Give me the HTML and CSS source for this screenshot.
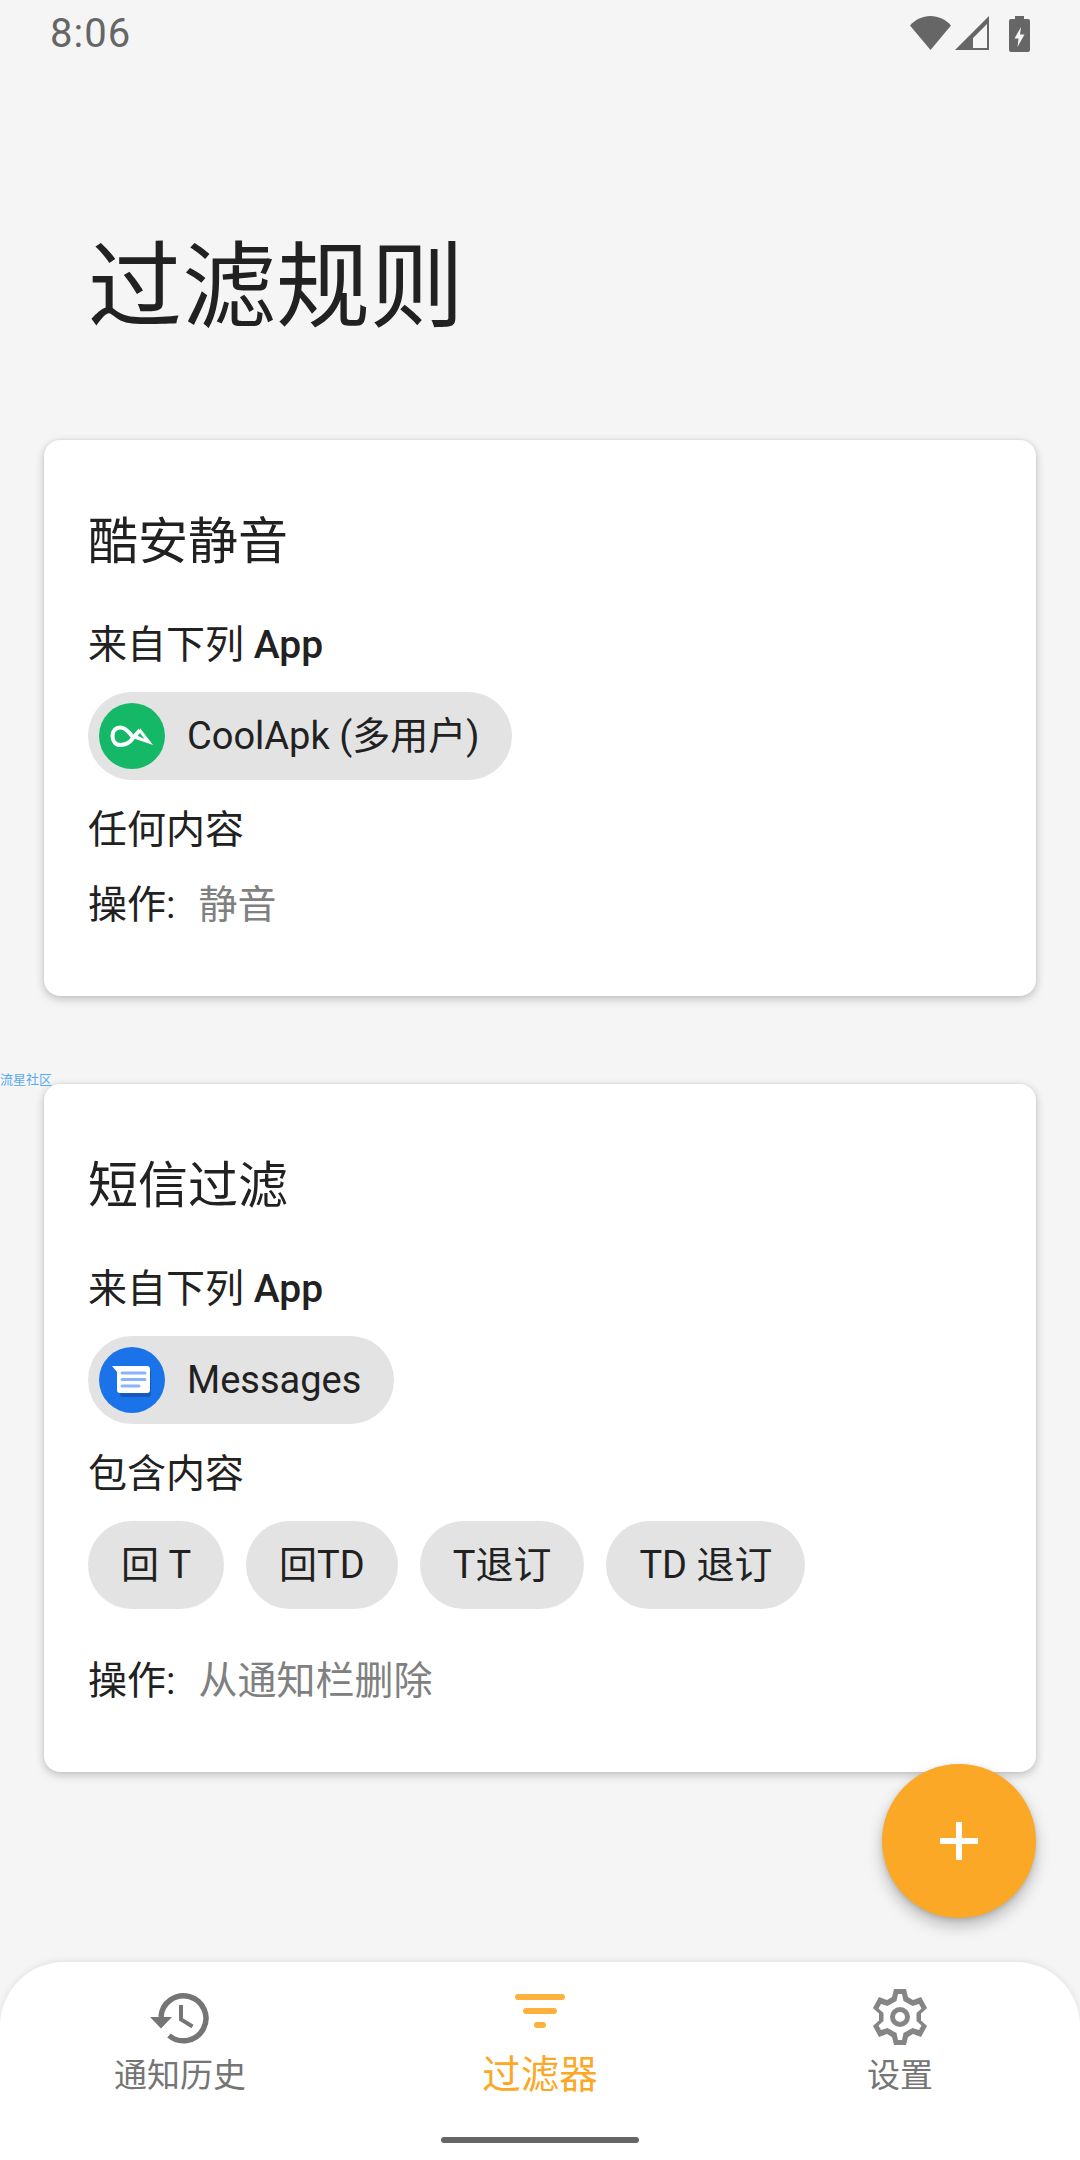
FILE: index.html
```html
<!DOCTYPE html>
<html lang="zh-CN">
<head>
<meta charset="utf-8">
<title>过滤规则</title>
<link rel="stylesheet" href="styles.css">
</head>
<body>
<div class="screen">
  <div class="status">
    <span class="time">8:06</span>
    <div class="status-icons">
      <svg class="ic-wifi" viewBox="0 0 41 34"><path d="M0 9.500C5.500 3.500 12.500 0 20.500 0S35.500 3.500 41 9.500L20.500 34z"/></svg>
      <svg class="ic-signal" viewBox="0 0 34 34"><path fill-rule="evenodd" d="M34 0v34H0zM32 8L18 22V32h14z"/></svg>
      <svg class="ic-batt" viewBox="0 0 21 36"><path fill-rule="evenodd" d="M6 0h9v3h4a2 2 0 0 1 2 2v29a2 2 0 0 1-2 2H2a2 2 0 0 1-2-2V5a2 2 0 0 1 2-2h4zM12 11L5.500 22.500H9.500L8.500 31l7-12.500H11z"/></svg>
    </div>
  </div>

  <h1 class="page-title">过滤规则</h1>

  <main class="cards">
    <section class="card">
      <h2 class="card-title">酷安静音</h2>
      <p class="line line-from">来自下列 <b>App</b></p>
      <div class="chips">
        <span class="chip chip-app">
          <svg class="app-icon" viewBox="0 0 66 66">
            <circle cx="33" cy="33" r="33" fill="#14b866"/>
            <path d="M41 27L31 38.500C28 41 25 42 21.500 42C16.500 42 13.500 38 13.500 33C13.500 28 16.500 24.500 21.500 24.500C26 24.500 29.500 28 34 34.500" fill="none" stroke="#fff" stroke-width="4"/>
            <path d="M41 25L54 42L35 35.500L38 32.500L45.500 36L41 30z" fill="#fff"/>
          </svg>
          <span>CoolApk (多用户)</span>
        </span>
      </div>
      <p class="line line-any">任何内容</p>
      <p class="line line-op">操作:<span class="op">静音</span></p>
    </section>

    <section class="card">
      <span class="watermark">流星社区</span>
      <h2 class="card-title">短信过滤</h2>
      <p class="line line-from">来自下列 <b>App</b></p>
      <div class="chips">
        <span class="chip chip-app">
          <svg class="app-icon" viewBox="0 0 66 66">
            <circle cx="33" cy="33" r="33" fill="#1a73e8"/>
            <path d="M16 23h33a3 3 0 0 1 3 3v21a3 3 0 0 1-3 3H24a3 3 0 0 1-3-3V30z" fill="#174ea6" opacity=".7"/>
            <path d="M13 19h35a3 3 0 0 1 3 3v21a3 3 0 0 1-3 3H21a3 3 0 0 1-3-3V25z" fill="#fff"/>
            <path d="M23 26h23M23 32.500h23M23 39h17" stroke="#8ab4f8" stroke-width="3" stroke-linecap="round" fill="none"/>
          </svg>
          <span>Messages</span>
        </span>
      </div>
      <p class="line line-any">包含内容</p>
      <div class="chips">
        <span class="chip">回 T</span>
        <span class="chip">回TD</span>
        <span class="chip">T退订</span>
        <span class="chip">TD 退订</span>
      </div>
      <p class="line line-op line-op-after">操作:<span class="op">从通知栏删除</span></p>
    </section>
  </main>

  <button class="fab" type="button" aria-label="添加">
    <svg viewBox="0 0 40 40"><path d="M20 1v38M1 20h38" stroke="#fff" stroke-width="6" fill="none"/></svg>
  </button>

  <nav class="nav">
    <div class="tabs">
      <div class="tab">
        <svg class="tab-icon" viewBox="0 0 60 60"><path d="M11 30A22.500 22.500 0 1 1 19 48.500" fill="none" stroke="#757575" stroke-width="5.500"/><path d="M0 30h22L11 41.500z" fill="#757575"/><path d="M31 18v14.500l11.500 7" fill="none" stroke="#757575" stroke-width="4"/></svg>
        <span>通知历史</span>
      </div>
      <div class="tab tab-active">
        <svg class="tab-icon" viewBox="0 0 60 60"><rect x="5" y="7" width="50" height="6" rx="3" fill="#ffb13b"/><rect x="13" y="21" width="34" height="6" rx="3" fill="#ffb13b"/><rect x="24" y="35" width="12" height="6" rx="3" fill="#ffb13b"/></svg>
        <span>过滤器</span>
      </div>
      <div class="tab">
        <svg class="tab-icon" viewBox="0 0 60 60"><path fill="#858585" fill-rule="evenodd" d="M24 2h12l2 8 5 3 8-3 6 11-6 5.500v7L57 39l-6 11-8-3-5 3-2 8H24l-2-8-5-3-8 3-6-11 6-5.500v-7L3 21l6-11 8 3 5-3zM28 7l-1.500 7-9 5L11 17l-2.500 4.500 5 4.500v8l-5 4.500L11 43l6.500-2 9 5L28 53h4l1.500-7 9-5L49 43l2.500-4.500-5-4.500v-8l5-4.500L49 17l-6.500 2-9-5L32 7z"/><circle cx="30" cy="30" r="7.500" fill="none" stroke="#858585" stroke-width="5"/></svg>
        <span>设置</span>
      </div>
    </div>
    <div class="home-bar"></div>
  </nav>
</div>
</body>
</html>
```

FILE: styles.css
```css
* { box-sizing: border-box; }
html, body { margin: 0; padding: 0; }
body {
  background: #f5f5f5;
  font-family: Roboto, "Noto Sans CJK SC", sans-serif;
  color: #212121;
}
.screen {
  position: relative;
  width: 1080px;
  height: 2160px;
  display: flex;
  flex-direction: column;
  overflow: hidden;
}
.status {
  height: 66px;
  padding: 0 50px;
  display: flex;
  align-items: center;
  justify-content: space-between;
  flex: none;
}
.time { font-size: 40px; color: #666; letter-spacing: 1px; }
.status-icons { display: flex; align-items: flex-start; gap: 4px; padding-top: 2px; }
.status-icons svg { fill: #666; display: block; }
.ic-wifi { width: 41px; height: 34px; }
.ic-signal { width: 34px; height: 34px; }
.ic-batt { width: 21px; height: 36px; margin-left: 16px; }
.page-title {
  margin: 0;
  flex: none;
  height: 374px;
  padding: 168px 0 0 88px;
  font-size: 94px;
  font-weight: 400;
  line-height: 108px;
}
.cards {
  flex: none;
  padding: 0 44px;
  display: flex;
  flex-direction: column;
  gap: 88px;
}
.card {
  position: relative;
  background: #fff;
  border-radius: 16px;
  padding: 68px 44px 63px;
  box-shadow: 0 3px 10px rgba(0,0,0,.22), 0 0 3px rgba(0,0,0,.08);
}
.card-title {
  margin: 0;
  font-size: 50px;
  font-weight: 400;
  line-height: 68px;
}
.line {
  margin: 0;
  font-size: 39px;
  line-height: 56px;
}
.line b { font-weight: 500; }
.line-from { margin-top: 41px; }
.line-any { margin-top: 22px; }
.line-op { margin-top: 19px; }
.line-op-after { margin-top: 44px; }
.op { color: #808080; margin-left: 23px; }
.chips {
  display: flex;
  gap: 22px;
  margin-top: 19px;
}
.chip {
  height: 88px;
  display: inline-flex;
  align-items: center;
  gap: 22px;
  padding: 0 33px;
  border-radius: 44px;
  background: #e3e3e3;
  font-size: 38px;
  line-height: 44px;
}
.chip-app { padding-left: 11px; }
.app-icon { width: 66px; height: 66px; flex: none; display: block; }
.watermark {
  position: absolute;
  left: -44px;
  top: -11px;
  font-size: 13px;
  line-height: 14px;
  color: #5aa9f0;
  white-space: nowrap;
}
.fab {
  position: absolute;
  left: 882px;
  top: 1764px;
  width: 154px;
  height: 154px;
  border: 0;
  padding: 0;
  border-radius: 50%;
  background: #faa826;
  box-shadow: 0 8px 16px rgba(0,0,0,.24), 0 2px 5px rgba(0,0,0,.12);
  display: flex;
  align-items: center;
  justify-content: center;
}
.fab svg { width: 40px; height: 40px; display: block; }
.nav {
  position: absolute;
  left: 0;
  right: 0;
  bottom: 0;
  height: 198px;
  background: #fff;
  border-radius: 64px 64px 0 0;
  box-shadow: 0 -1px 6px rgba(0,0,0,.09);
  display: flex;
  flex-direction: column;
}
.tabs {
  display: flex;
  flex: 1;
}
.tab {
  flex: 1;
  display: flex;
  flex-direction: column;
  align-items: center;
  padding-top: 25px;
  font-size: 33px;
  line-height: 44px;
  color: #757575;
}
.tab-icon { width: 60px; height: 60px; display: block; margin-bottom: 7px; }
.tab-active { color: #faa826; font-size: 38.500px; line-height: 50px; }
.tab-active .tab-icon { margin-bottom: 3px; }
.home-bar {
  width: 198px;
  height: 6px;
  background: #666;
  border-radius: 3px;
  margin: 0 auto 17px;
  flex: none;
}
```
